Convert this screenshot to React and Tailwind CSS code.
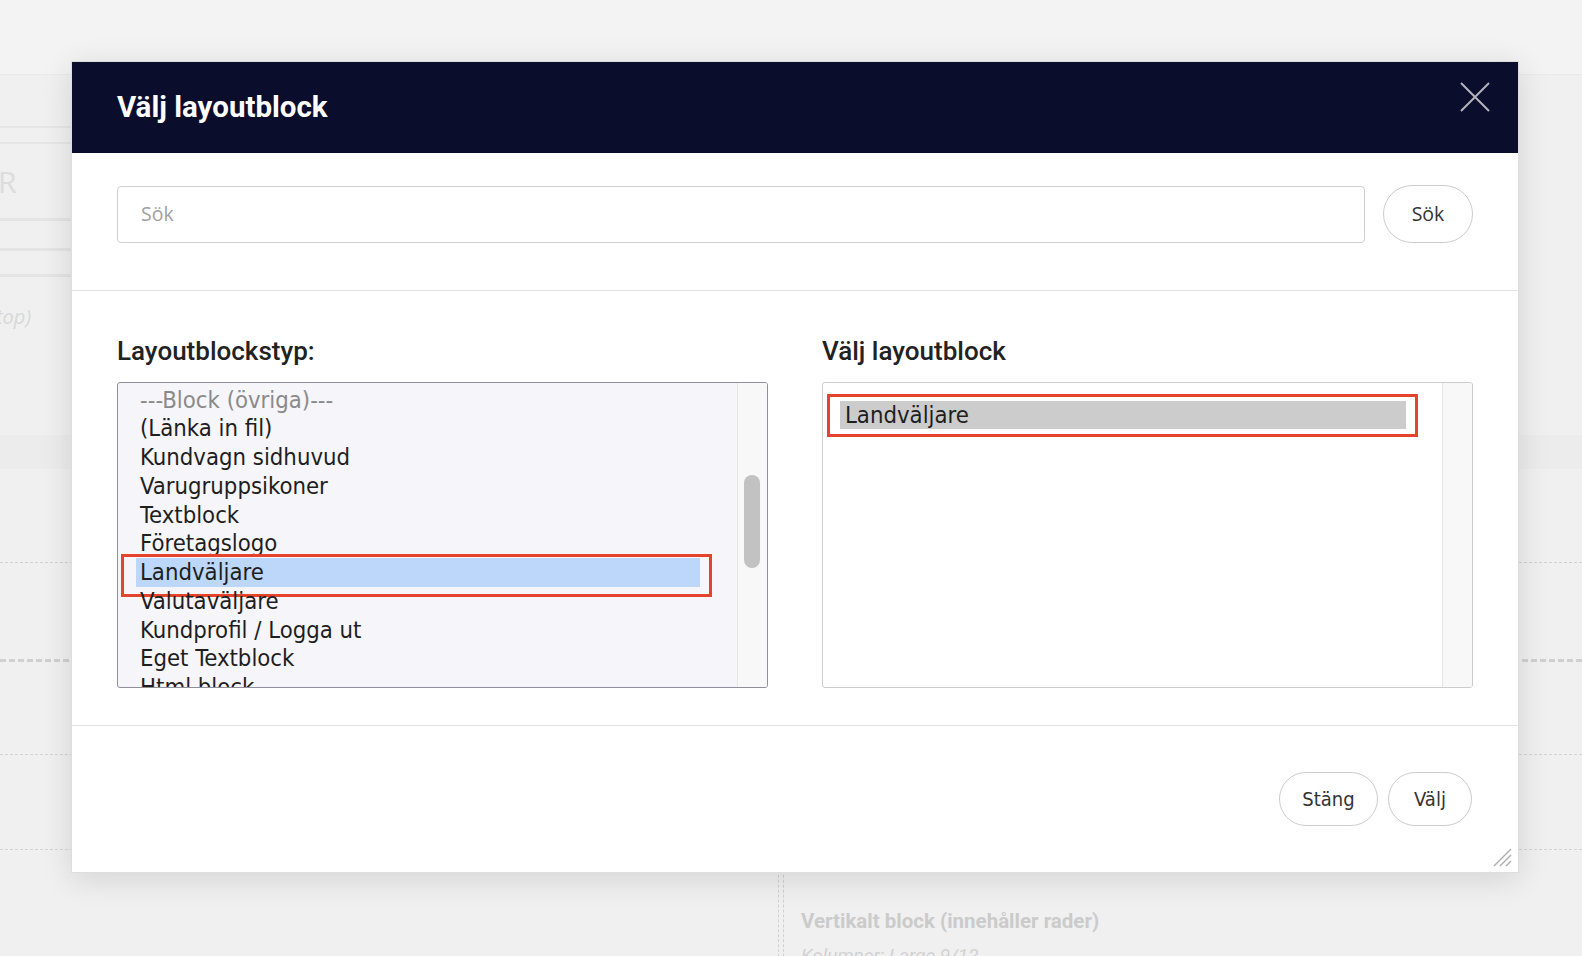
const leftItems = [
  { label: "---Block (övriga)---", muted: true },
  { label: "(Länka in fil)" },
  { label: "Kundvagn sidhuvud" },
  { label: "Varugruppsikoner" },
  { label: "Textblock" },
  { label: "Företagslogo" },
  { label: "Landväljare", selected: true },
  { label: "Valutaväljare" },
  { label: "Kundprofil / Logga ut" },
  { label: "Eget Textblock" },
  { label: "Html block" },
];

const listFont = "font-['DejaVu_Sans_Condensed','DejaVu_Sans',sans-serif]";

function Background() {
  return (
    <div className="flex h-[956px] flex-col overflow-hidden bg-[#f0f0f0] font-['Roboto',sans-serif]">
      <div className="h-[75px] shrink-0 border-b border-[#e9e9e9] bg-[#f3f3f3]" />
      {/* left strip, only the edge shows beside the dialog */}
      <div className="flex h-[360px] shrink-0 flex-col">
        <div className="mt-[51px] h-[16px] w-[300px] border-t-2 border-[#e6e6e6]" />
        <div className="h-[2px] w-[300px] bg-[#e6e6e6]" />
        <div className="ml-[-2px] mt-[18px] h-[40px] text-[30px] leading-[40px] text-[#dcdcdc] font-['Open_Sans',sans-serif]">
          R
        </div>
        <div className="mt-[16px] h-[3px] w-[300px] bg-[#e4e4e4]" />
        <div className="mt-[27px] h-[3px] w-[300px] bg-[#e4e4e4]" />
        <div className="mt-[23px] h-[3px] w-[300px] bg-[#e4e4e4]" />
        <div className="ml-[-4px] mt-[28px] text-[20px] italic leading-[24px] text-[#d8d8d8] font-['Open_Sans',sans-serif]">
          top)
        </div>
      </div>
      <div className="h-[34px] shrink-0 bg-[#ececec]" />
      <div className="h-[93px] shrink-0" />
      <div className="h-[97px] shrink-0 border-t border-dashed border-[#d2d2d2]" />
      <div className="h-[95px] shrink-0 border-t-[3px] border-dashed border-[#d0d0d0]" />
      <div className="h-[95px] shrink-0 border-t border-dashed border-[#d4d4d4]" />
      <div className="flex flex-1 border-t border-dashed border-[#d4d4d4]">
        <div className="w-[778px] shrink-0" />
        <div className="w-[5px] shrink-0 border-l border-dashed border-[#d0d0d0]" />
        <div className="flex-1 border-l border-dashed border-[#d0d0d0] pl-[17px] pt-[59px]">
          <p className="text-[20.5px] font-bold leading-[24px] text-[#cbcbcb]">
            Vertikalt block (innehåller rader)
          </p>
          <p className="mt-[12px] text-[19px] italic leading-[22px] text-[#d2d2d2]">
            Kolumner: Large 9/12
          </p>
        </div>
      </div>
    </div>
  );
}

function ScrollTrack({ thumb }) {
  return (
    <div className="relative w-[30px] shrink-0 border-l border-[#e6e6e6] bg-[#f8f8f8]">
      {thumb && (
        <div className="absolute left-[6px] top-[92px] h-[93px] w-[16px] rounded-full bg-[#c2c2c2]" />
      )}
    </div>
  );
}

function Dialog() {
  return (
    <div className="absolute left-[71px] top-[61px] w-[1448px] border border-[#dedede] bg-white shadow-[0_6px_30px_rgba(0,0,0,0.12)]">
      <div className="relative flex h-[91px] items-center bg-[#0b0d2c] pl-[45px]">
        <h1 className="text-[29.5px] font-bold text-white font-['Roboto',sans-serif]">
          Välj layoutblock
        </h1>
        <button
          type="button"
          className="absolute right-[28px] top-[20px]"
          aria-label="Stäng"
        >
          <svg width="30" height="30" viewBox="0 0 30 30" stroke="#b4b4bc" strokeWidth="2">
            <path d="M1 1 L29 29 M29 1 L1 29" />
          </svg>
        </button>
      </div>

      <div className="flex items-center gap-[18px] border-b border-[#e3e3e3] px-[45px] pb-[47px] pt-[32px] font-['Open_Sans',sans-serif]">
        <div className="flex h-[57px] flex-1 items-center rounded-[4px] border border-[#cfcfcf] px-[23px] text-[19.5px] text-[#a0a0a0]">
          Sök
        </div>
        <button
          type="button"
          className="h-[58px] w-[90px] rounded-full border border-[#cccccc] text-[19.5px] text-[#333]"
        >
          Sök
        </button>
      </div>

      <div className="flex gap-[54px] border-b border-[#e3e3e3] px-[45px] pb-[37px] pt-[45px] font-['Roboto',sans-serif]">
        <div className="flex-1">
          <p className="mb-[16px] text-[26px] font-medium leading-[30px] text-[#222]">
            Layoutblockstyp:
          </p>
          <div className={`flex h-[306px] overflow-hidden rounded-[3px] border border-[#8f8f99] bg-[#f5f5fa] ${listFont}`}>
            <div className="flex-1 overflow-hidden pl-[18px] pr-[37px] pt-[2.5px] text-[23.7px] text-[#1e1e1e]">
              {leftItems.map((item) => (
                <div key={item.label} className="relative h-[28.75px]">
                  <div
                    className={`h-full whitespace-nowrap pl-[4px] leading-[28.75px] ${
                      item.selected ? "bg-[#bcd7f9]" : ""
                    } ${item.muted ? "text-[#8a8a8a]" : ""}`}
                  >
                    {item.label}
                  </div>
                  {item.selected && (
                    <div className="absolute bottom-[-10px] left-[-15px] right-[-12px] top-[-4px] border-[3px] border-[#e5432b]" />
                  )}
                </div>
              ))}
            </div>
            <ScrollTrack thumb />
          </div>
        </div>
        <div className="flex-1">
          <p className="mb-[16px] text-[26px] font-medium leading-[30px] text-[#222]">
            Välj layoutblock
          </p>
          <div className={`flex h-[306px] overflow-hidden rounded-[3px] border border-[#cccccc] bg-white ${listFont}`}>
            <div className="flex-1 pl-[17px] pr-[36px] pt-[18px] text-[23.7px] text-[#1e1e1e]">
              <div className="relative h-[28px]">
                <div className="h-full bg-[#cccccc] pl-[5px] leading-[28px]">
                  Landväljare
                </div>
                <div className="absolute bottom-[-8px] left-[-13px] right-[-12px] top-[-7px] border-[3px] border-[#e5432b]" />
              </div>
            </div>
            <ScrollTrack />
          </div>
        </div>
      </div>

      <div className={`relative flex justify-end gap-[10px] px-[46px] pb-[46px] pt-[46px] ${listFont}`}>
        <button
          type="button"
          className="h-[54px] w-[99px] rounded-full border border-[#cccccc] text-[20px] text-[#333]"
        >
          Stäng
        </button>
        <button
          type="button"
          className="h-[54px] w-[84px] rounded-full border border-[#cccccc] text-[20px] text-[#333]"
        >
          Välj
        </button>
        <svg
          className="absolute bottom-[5px] right-[6px]"
          width="20"
          height="20"
          viewBox="0 0 20 20"
          fill="none"
          stroke="#b0b0b0"
          strokeWidth="1.4"
        >
          <path d="M2 19 L19 2" />
          <path d="M8 19 L19 8" />
          <path d="M14 19 L19 14" />
        </svg>
      </div>
    </div>
  );
}

export default function App() {
  return (
    <div className="relative h-[956px] w-full overflow-hidden">
      <Background />
      <Dialog />
    </div>
  );
}
